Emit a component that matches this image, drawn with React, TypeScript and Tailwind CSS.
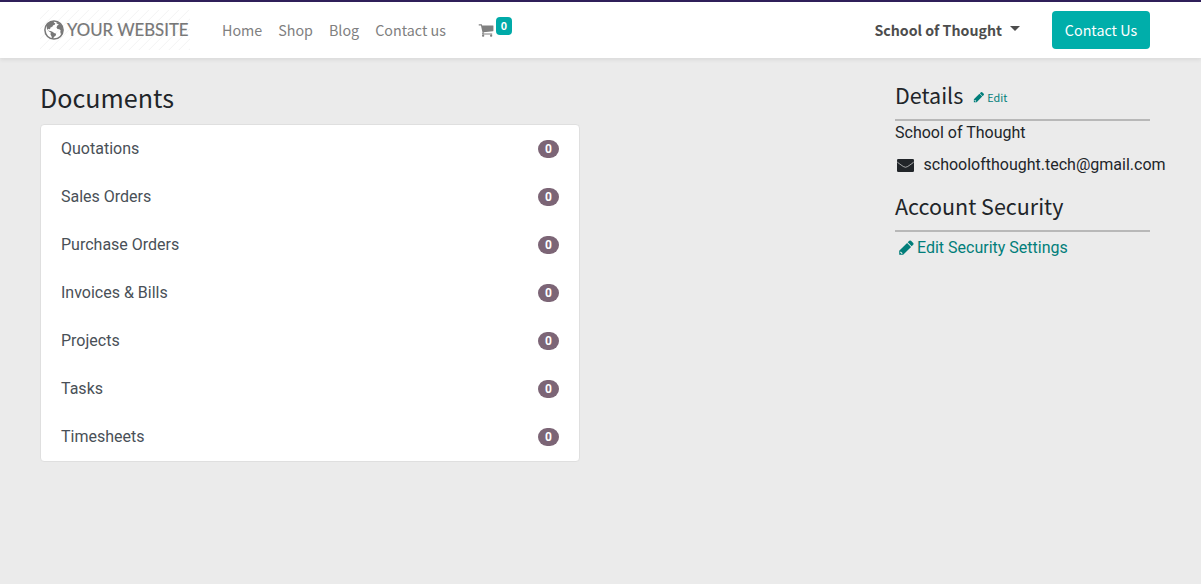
import React from 'react';

const SANS = "font-['Noto_Sans_CJK_SC',sans-serif]";

const PENCIL =
  'M410 1590l85-85-200-200-85 85v70h130v130h70zM960 416l416 416-832 832h-416v-416zm683 96q0 53-37 90l-166 166-416-416 166-165q36-38 90-38 53 0 91 38l235 234q37 39 37 91z';
const CART =
  'M704 1536q0 52-38 90t-90 38-90-38-38-90 38-90 90-38 90 38 38 90zm896 0q0 52-38 90t-90 38-90-38-38-90 38-90 90-38 90 38 38 90zm128-1088v512q0 24-16.5 42.5t-40.5 21.5l-1044 122q13 60 13 70 0 16-24 64h920q26 0 45 19t19 45-19 45-45 19h-1024q-26 0-45-19t-19-45q0-11 8-31.5t16-36 21.5-40 15.5-29.5l-177-823h-204q-26 0-45-19t-19-45 19-45 45-19h256q16 0 28.5 6.5t19.5 15.5 13 24.5 8 26 5.5 29.5 4.5 26h1201q26 0 45 19t19 45z';

function Icon({ d, className }: { d: string; className: string }) {
  return (
    <svg viewBox="0 0 1792 1792" fill="currentColor" fillRule="evenodd" className={`shrink-0 ${className}`} aria-hidden="true">
      <path d={d} />
    </svg>
  );
}

function Globe() {
  return (
    <svg viewBox="0 0 20 20" className="size-5 shrink-0" aria-hidden="true">
      <circle cx="10" cy="10" r="9.1" fill="none" stroke="currentColor" strokeWidth="1.5" />
      <path
        fill="currentColor"
        d="M3.2 3.8 7 1.4l3.2-.2-.4 1.3 1.4.9-.5 1.4-1.6.5-.6 1.3-2 1-.6 1.6-1.2-.5-1 .8 1 1.2 1.5.3 1.8.4 2.6 1.8 1.6.5-.6 2-1.5 1-.8 1.6-1.2.6-.5-2.5-1.1-2 .3-1.9-2-1.3L3 9 2.5 6.5z M12.5 1.8 15.5 3l2.2 2.6 1.3 4-.5 3.2-1.5 1.8-.7-2.6.3-1.8-1.2-1-1.9-.2-1-1.6.8-2 1.4-.7-.7-1-1.2.3z"
      />
    </svg>
  );
}

const documents = ['Quotations', 'Sales Orders', 'Purchase Orders', 'Invoices & Bills', 'Projects', 'Tasks', 'Timesheets'];

function Header() {
  return (
    <header className={`flex h-[58px] items-start border-t-2 border-[#2f1f59] bg-white pr-[51px] pl-10 shadow-[0_2px_4px_rgba(0,0,0,0.075)] ${SANS}`}>
      <a className="mt-2 flex h-10 w-[150px] items-center bg-[repeating-linear-gradient(135deg,#fff_0px,#fff_5.5px,#f4f4f4_6.3px,#fff_7.07px)] pl-1 text-[#777]">
        <Globe />
        <span className="ml-[3px] font-['Lato',sans-serif] text-[16.8px] leading-5 whitespace-nowrap [-webkit-text-stroke:0.2px_#777]">YOUR WEBSITE</span>
      </a>
      <nav className="mt-4 ml-8 flex gap-4 text-[14.3px] leading-6 text-[#808080]">
        <a>Home</a>
        <a>Shop</a>
        <a>Blog</a>
        <a>Contact us</a>
      </nav>
      <a className="mt-[15px] ml-8 flex text-[#808080]">
        <Icon d={CART} className="mt-[5px] size-4" />
        <span className="ml-0.5 flex h-[18px] w-4 items-center justify-center rounded bg-[#00aaa8] text-[10.7px] font-bold text-white">0</span>
      </a>
      <a className="mt-4 ml-auto flex items-center text-[14.2px] leading-6 font-bold text-[#4d4d4d]">
        School of Thought
        <span className="-mt-[3px] ml-2 border-x-[5px] border-t-[5px] border-x-transparent border-t-[#4d4d4d]" />
      </a>
      <button className="mt-[9px] ml-8 h-[38px] w-[98px] rounded bg-[#00aeaa] text-[14.3px] leading-6 text-white">Contact Us</button>
    </header>
  );
}

export default function App() {
  return (
    <div className="h-[584px] overflow-hidden bg-[#ebebeb] font-['Roboto',sans-serif] text-base leading-6 text-[#212529]">
      <Header />
      <main className="flex items-start justify-between pr-[51px] pl-10">
        <section className="w-[540px] pt-[22px]">
          <h3 className={`text-[25.1px] leading-[34px] ${SANS}`}>Documents</h3>
          <ul className="mt-2.5 rounded border border-[#dfdfdf] bg-white text-[#495057]">
            {documents.map((name) => (
              <li key={name} className="flex h-12 items-center justify-between px-5">
                <span>{name}</span>
                <span className="flex h-[18px] w-[21px] items-center justify-center rounded-full bg-[#7c6576] text-xs font-bold text-white">0</span>
              </li>
            ))}
          </ul>
        </section>
        <aside className="w-[255px] whitespace-nowrap">
          <div className={`flex h-[61px] items-end ${SANS}`}>
            <h4 className="mb-[9px] text-[21.5px] leading-[30px]">Details</h4>
            <a className="mb-[13px] ml-2.5 flex items-center text-[10.8px] leading-[18px] text-[#017e7a]">
              <Icon d={PENCIL} className="mr-0.5 -mt-px size-3" />
              Edit
            </a>
          </div>
          <hr className="border-t-2 border-[#b8b8b8]" />
          <p>School of Thought</p>
          <p className="mt-2 flex items-center">
            <svg viewBox="0 0 17 13" className="mr-[9.5px] ml-0.5 h-[13px] w-[17px] shrink-0" aria-hidden="true">
              <rect width="17" height="13" rx="1.3" fill="currentColor" />
              <path d="M0 2.6Q.7 3.7 2 4.5L6.300 7.5Q8.5 9 10.700 7.5L15 4.500Q16.300 3.700 17 2.600" fill="none" stroke="#ebebeb" strokeWidth=".65" />
            </svg>
            schoolofthought.tech@gmail.com
          </p>
          <h4 className={`mt-3.5 text-[21.5px] leading-[30px] ${SANS}`}>Account Security</h4>
          <hr className="mt-[9px] border-t-2 border-[#b8b8b8]" />
          <a className="mt-1 ml-[3px] flex items-center text-[#017e7a]">
            <Icon d={PENCIL} className="-mt-px mr-0.5 size-[17px]" />
            Edit Security Settings
          </a>
        </aside>
      </main>
    </div>
  );
}
